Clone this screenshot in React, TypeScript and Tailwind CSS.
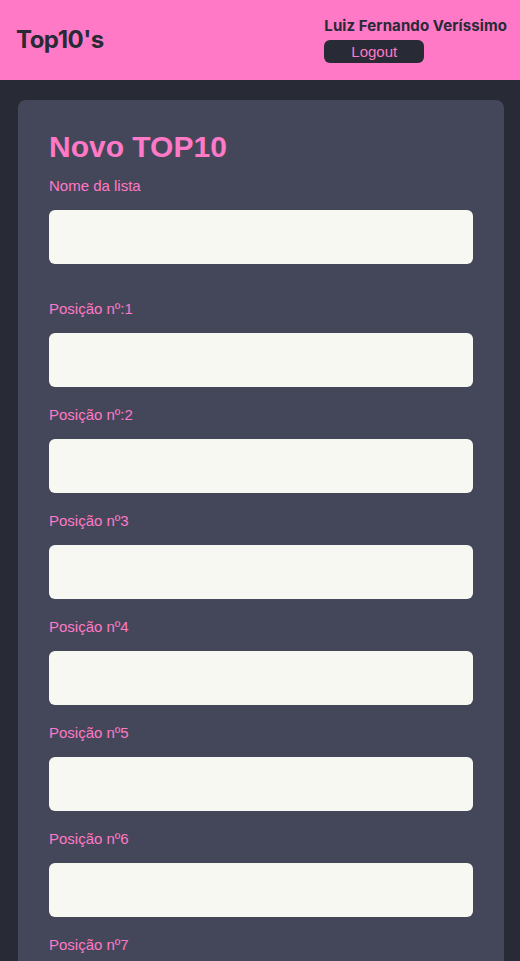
const positions = [
  "Posição nº:1",
  "Posição nº:2",
  "Posição nº3",
  "Posição nº4",
  "Posição nº5",
  "Posição nº6",
  "Posição nº7",
  "Posição nº8",
  "Posição nº9",
  "Posição nº10",
];

function Field({ label, first }: { label: string; first?: boolean }) {
  return (
    <div className={first ? "mb-[36px]" : "mb-[19px]"}>
      <label className="block text-[15px] leading-[17px] text-[#ff79c6] mb-4">{label}</label>
      <input
        type="text"
        className="block w-full h-[54px] rounded-md bg-[#f8f8f2] px-3 text-[#282a36] outline-none"
      />
    </div>
  );
}

export default function App() {
  return (
    <div
      className="min-h-screen bg-[#282a36]"
      style={{ fontFamily: '"Liberation Sans", Arial, sans-serif' }}
    >
      {/* Top bar */}
      <header className="h-20 bg-[#ff79c6] flex items-center justify-between pl-4 pr-[13px]">
        <h1 className="text-[24px] leading-[30px] font-bold text-[#282a36] font-['Inter',sans-serif] tracking-[-0.5px]">
          Top10's
        </h1>
        <div className="flex flex-col items-start gap-[5px]">
          <span className="text-[15px] leading-[18px] font-bold text-[#282a36] font-['Inter',sans-serif] tracking-[0.1px]">
            Luiz Fernando Veríssimo
          </span>
          <button className="w-[100px] h-[23px] rounded-md bg-[#282a36] text-[15px] leading-none text-[#ff79c6]">
            Logout
          </button>
        </div>
      </header>

      {/* Form card */}
      <main className="pl-[18px] pr-4 pt-5">
        <div className="rounded-lg bg-[#44475a] px-[31px] pt-[30px] pb-8">
          <h2 className="text-[30px] leading-[34px] font-bold text-[#ff79c6] mb-[13px]">Novo TOP10</h2>
          <Field label="Nome da lista" first />
          {positions.map((p) => (
            <Field key={p} label={p} />
          ))}
        </div>
      </main>
    </div>
  );
}
